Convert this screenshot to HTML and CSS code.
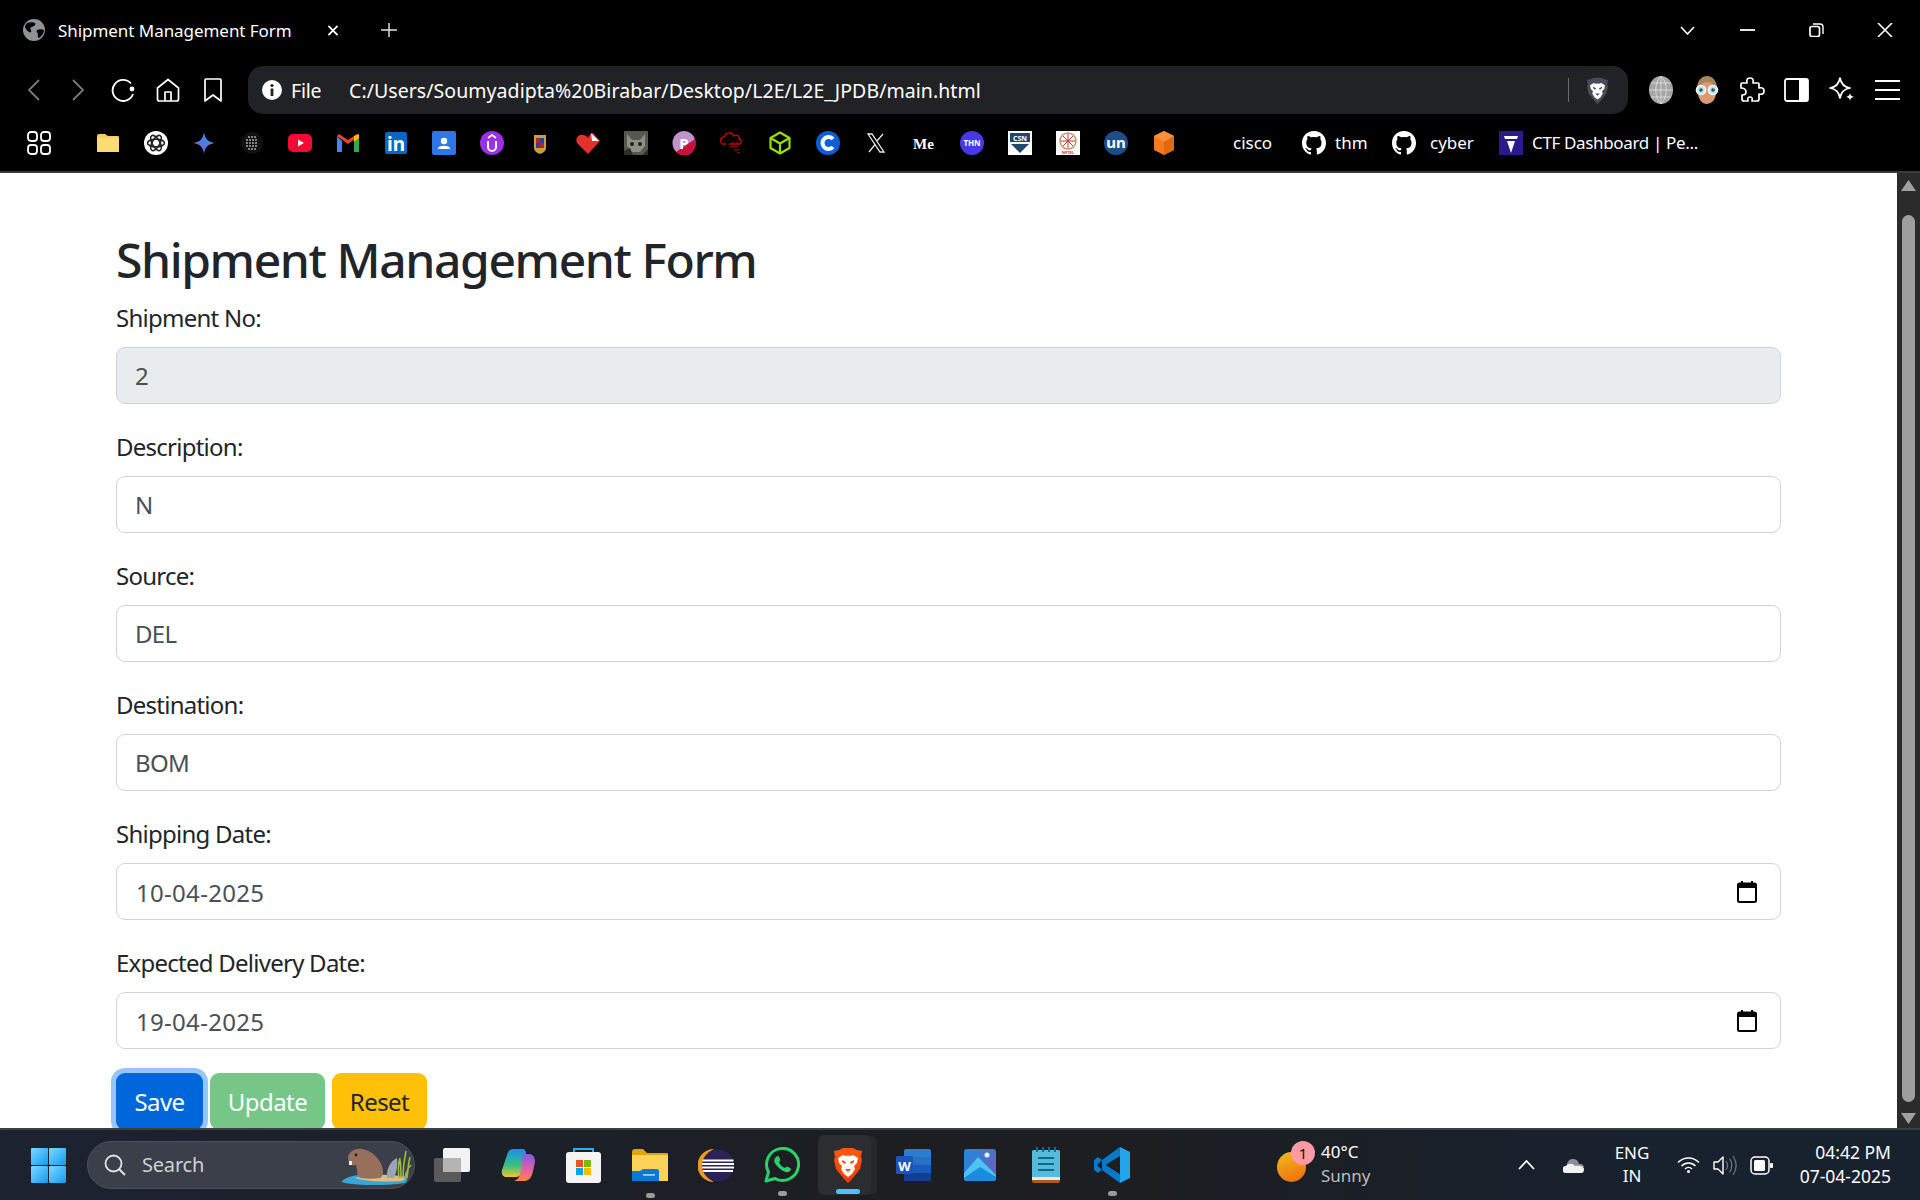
FILE: index.html
```html
<!DOCTYPE html>
<html lang="en">
<head>
<meta charset="utf-8">
<title>Shipment Management Form</title>
<link rel="stylesheet" href="styles.css">
</head>
<body>
<header class="chrome">
  <div class="tabrow">
    <svg class="tab-globe" viewBox="0 0 22 22"><circle cx="11" cy="11" r="11" fill="#8f9296"/><path d="M4 4c3-1 6-1 8 0 1 2-1 3-3 4-2 0-2 2-1 3 1 2-1 3-2 2-2-1-3-3-4-5 0-1 1-3 2-4zM14 11c2-1 5-1 7 0 0 3-2 6-5 8-2-1-1-3-1-4-1-1-2-3-1-4z" fill="#000"/></svg>
    <span class="tab-title">Shipment Management Form</span>
    <svg class="tab-close" viewBox="0 0 12 12"><path d="M1 1l10 10M11 1L1 11" stroke="#fff" stroke-width="2"/></svg>
    <svg class="tab-plus" viewBox="0 0 16 14"><path d="M8 0v14M0 7h16" stroke="#e6e6e6" stroke-width="1.4"/></svg>
    <svg class="win-chev" viewBox="0 0 15 9"><path d="M1 1l6.5 7L14 1" fill="none" stroke="#fff" stroke-width="1.6"/></svg>
    <svg class="win-min" viewBox="0 0 15 2"><path d="M0 1h15" stroke="#fff" stroke-width="1.8"/></svg>
    <svg class="win-max" viewBox="0 0 15 14"><rect x="1" y="3.5" width="9.5" height="10" rx="2" fill="none" stroke="#fff" stroke-width="1.7"/><path d="M4 1h7a3 3 0 0 1 3 3v7" fill="none" stroke="#fff" stroke-width="1.4"/></svg>
    <svg class="win-close" viewBox="0 0 16 14"><path d="M1 0l14 14M15 0L1 14" stroke="#fff" stroke-width="1.6"/></svg>
  </div>
  <div class="toolbar">
    <svg class="tb-back" viewBox="0 0 13 22"><path d="M12 1L2 11l10 10" fill="none" stroke="#7a7a7a" stroke-width="1.8"/></svg>
    <svg class="tb-fwd" viewBox="0 0 13 22"><path d="M1 1l10 10L1 21" fill="none" stroke="#7a7a7a" stroke-width="1.8"/></svg>
    <svg class="tb-reload" viewBox="0 0 24 24"><path d="M20 5.5A10.5 10.500 0 1 0 22 16" fill="none" stroke="#fff" stroke-width="1.8"/><circle cx="21" cy="11" r="2.400" fill="#fff"/></svg>
    <svg class="tb-home" viewBox="0 0 24 24"><path d="M12 1.500L1.500 10v11a2 2 0 0 0 2 2h17a2 2 0 0 0 2-2V10zM9 23v-9h6v9" fill="none" stroke="#fff" stroke-width="1.700" stroke-linejoin="round"/></svg>
    <svg class="tb-mark" viewBox="0 0 18 24"><path d="M2 1h14a1 1 0 0 1 1 1v21l-8-6-8 6V2a1 1 0 0 1 1-1z" fill="none" stroke="#fff" stroke-width="1.700" stroke-linejoin="round"/></svg>
    <div class="omnibox">
      <svg class="info" viewBox="0 0 20 20"><circle cx="10" cy="10" r="10" fill="#fff"/><circle cx="10" cy="5.500" r="1.600" fill="#212226"/><rect x="8.600" y="8.500" width="2.800" height="7.500" fill="#212226"/></svg>
      <span class="scheme">File</span>
      <span class="url">C:/Users/Soumyadipta%20Birabar/Desktop/L2E/L2E_JPDB/main.html</span>
      <span class="omni-sep"></span>
      <svg class="omni-brave" viewBox="0 0 30 36"><path d="M6 3l4-2h10l4 2 5 1-1 6 1 3-2 9-8 10-4 4-4-4-8-10-2-9 1-3-1-6z" fill="#4a4a58"/><path d="M5 11l5-3 3 1 2-.5 2 .5 3-1 5 3-1 5-3 3 1 3-3 5-4 3-4-3-3-5 1-3-3-3z" fill="#fff"/><path d="M9 13l4 2-1 2-3-2zM21 13l-4 2 1 2 3-2zM12 22h6l-3 3z" fill="#4a4a58"/></svg>
    </div>
    <svg class="tb-globe" viewBox="0 0 24 28"><ellipse cx="12" cy="14" rx="12" ry="14" fill="#a5a5a5"/><path d="M0 14h24M2 7h20M2 21h20M12 0v28M12 0c-7 6-7 22 0 28M12 0c7 6 7 22 0 28" fill="none" stroke="#ddd" stroke-width=".9"/></svg>
    <svg class="tb-avatar" viewBox="0 0 24 28"><path d="M2 16C1 4 7 0 12 0s11 4 10 16z" fill="#a8855a"/><ellipse cx="12" cy="17" rx="9" ry="11" fill="#dd9a70"/><circle cx="6" cy="14" r="4.600" fill="#bfe6ec" stroke="#fff" stroke-width="1.400"/><circle cx="18" cy="14" r="4.600" fill="#bfe6ec" stroke="#fff" stroke-width="1.400"/><circle cx="6" cy="14" r="1.800" fill="#27586a"/><circle cx="18" cy="14" r="1.800" fill="#27586a"/></svg>
    <svg class="tb-puzzle" viewBox="0 0 26 26"><path d="M3 6h5C7 2 9 1 11 1s4 1 3 5h5a1 1 0 0 1 1 1v4c4-1 5 1 5 3s-1 4-5 3v5a2 2 0 0 1-2 2h-5c1-4-1-4-2-4s-3 0-2 4H5a2 2 0 0 1-2-2v-4c3 0 4-1 4-3S5 11 2 11V7a1 1 0 0 1 1-1z" fill="none" stroke="#fff" stroke-width="1.700" stroke-linejoin="round"/></svg>
    <svg class="tb-side" viewBox="0 0 25 24"><rect x="1" y="1" width="23" height="22" rx="2" fill="none" stroke="#fff" stroke-width="1.800"/><rect x="15" y="1" width="9" height="22" fill="#fff"/></svg>
    <svg class="tb-star" viewBox="0 0 26 26"><path d="M11 1c1 6 4 9 10 10-6 1-9 4-10 10C10 15 7 12 1 11c6-1 9-4 10-10z" fill="none" stroke="#fff" stroke-width="1.700" stroke-linejoin="round"/><path d="M21 16c.3 2 1 3 4 4-3 .5-3.700 1.500-4 4-.3-2.500-1-3.500-4-4 3-1 3.700-2 4-4z" fill="#fff"/></svg>
    <svg class="tb-menu" viewBox="0 0 25 22"><path d="M0 2h25M0 11h25M0 20h25" stroke="#fff" stroke-width="2"/></svg>
  </div>
  <nav class="bookmarks">
    <div class="bm bm-apps"><svg class="ico" viewBox="0 0 24 24"><g fill="none" stroke="#fff" stroke-width="1.800"><rect x="1" y="1" width="9" height="9" rx="3"/><rect x="14" y="1" width="9" height="9" rx="3"/><rect x="1" y="14" width="9" height="9" rx="3"/><rect x="14" y="14" width="9" height="9" rx="3"/></g></svg></div>
    <div class="bm bm-first"><svg class="ico" viewBox="0 0 24 24"><path d="M1 5a2 2 0 0 1 2-2h6l3 2h10a1 1 0 0 1 1 1v14a1 1 0 0 1-1 1H2a1 1 0 0 1-1-1z" fill="#f8cf5a"/><path d="M1 7h22v13a1 1 0 0 1-1 1H2a1 1 0 0 1-1-1z" fill="#fddc73"/></svg></div>
    <div class="bm"><svg class="ico" viewBox="0 0 24 24"><circle cx="12" cy="12" r="12" fill="#fff"/><g fill="none" stroke="#222" stroke-width="1.600"><ellipse cx="12" cy="12" rx="8.500" ry="3.800"/><ellipse cx="12" cy="12" rx="8.500" ry="3.800" transform="rotate(60 12 12)"/><ellipse cx="12" cy="12" rx="8.500" ry="3.800" transform="rotate(120 12 12)"/></g></svg></div>
    <div class="bm"><svg class="ico" viewBox="0 0 24 24"><defs><linearGradient id="gem" x1="0" x2="1" y1="1" y2="0"><stop offset="0" stop-color="#7a5ac8"/><stop offset="1" stop-color="#2b9cf0"/></linearGradient></defs><path d="M12 1c1 7 4 10 11 11-7 1-10 4-11 11-1-7-4-10-11-11 7-1 10-4 11-11z" fill="url(#gem)"/></svg></div>
    <div class="bm"><svg class="ico" viewBox="0 0 24 24"><circle cx="12" cy="12" r="11" fill="#111"/><g fill="#aaa"><circle cx="9" cy="6" r="1"/><circle cx="12" cy="6" r="1"/><circle cx="15" cy="6" r="1"/><circle cx="7" cy="9" r="1"/><circle cx="10" cy="9" r="1"/><circle cx="13" cy="9" r="1"/><circle cx="16" cy="9" r="1"/><circle cx="7" cy="12" r="1"/><circle cx="10" cy="12" r="1"/><circle cx="13" cy="12" r="1"/><circle cx="16" cy="12" r="1"/><circle cx="7" cy="15" r="1"/><circle cx="10" cy="15" r="1"/><circle cx="13" cy="15" r="1"/><circle cx="16" cy="15" r="1"/><circle cx="9" cy="18" r="1"/><circle cx="12" cy="18" r="1"/><circle cx="15" cy="18" r="1"/></g></svg></div>
    <div class="bm"><svg class="ico" viewBox="0 0 24 24"><rect y="3" width="24" height="18" rx="5" fill="#f40a32"/><path d="M10 8.500l6 3.500-6 3.500z" fill="#fff"/></svg></div>
    <div class="bm"><svg class="ico" viewBox="0 0 24 24"><path d="M1 5v16h5V10z" fill="#4285f4"/><path d="M23 5v16h-5V10z" fill="#34a853"/><path d="M1 5l11 8 11-8-2-2-9 6-9-6z" fill="#ea4335"/><path d="M18 5l5-2v4l-5 4z" fill="#fbbc04"/></svg></div>
    <div class="bm"><svg class="ico" viewBox="0 0 24 24"><rect x="1" y="1" width="22" height="22" rx="2" fill="#0a66c2"/><text class="t-in" x="12" y="19.500" text-anchor="middle">in</text></svg></div>
    <div class="bm"><svg class="ico" viewBox="0 0 24 24"><rect width="24" height="24" rx="2" fill="#2f76e8"/><circle cx="12" cy="10" r="3.200" fill="#fff"/><path d="M6 18h12v-1c-2-3-10-3-12 0z" fill="#fff"/></svg></div>
    <div class="bm"><svg class="ico" viewBox="0 0 24 24"><ellipse cx="12" cy="12" rx="12" ry="12" fill="#9b30e8"/><path d="M8 10v6a4 4 0 0 0 8 0v-6" fill="none" stroke="#fff" stroke-width="2"/><path d="M8 7l4-3 4 3" fill="none" stroke="#fff" stroke-width="1.800"/></svg></div>
    <div class="bm"><svg class="ico" viewBox="0 0 24 24"><path d="M6 4h12v13c0 3-3 5-6 6-3-1-6-3-6-6z" fill="#c9a040"/><rect x="8" y="7" width="4" height="5" fill="#b5242c"/><rect x="12" y="7" width="4" height="5" fill="#2c3f96"/><rect x="8" y="12" width="4" height="5" fill="#2c3f96"/><rect x="12" y="12" width="4" height="5" fill="#b5242c"/></svg></div>
    <div class="bm"><svg class="ico" viewBox="0 0 24 24"><path d="M12 23L1 12c-2-4 1-9 6-8 2 0 4 1 5 3 1-3 3-5 5-5l7 8z" fill="#e5312c"/><path d="M15 2l8 8h-7z" fill="#fff"/></svg></div>
    <div class="bm"><svg class="ico" viewBox="0 0 24 24"><rect width="24" height="24" fill="#56574d"/><path d="M3 3l5 6h8l5-6v12l-5 6H8l-5-6z" fill="#8d8e84"/><circle cx="8" cy="13" r="2" fill="#1f201b"/><circle cx="16" cy="13" r="2" fill="#1f201b"/><path d="M0 20l6-3 3 7H0zM24 18l-5 6h5z" fill="#2c2d28"/></svg></div>
    <div class="bm"><svg class="ico" viewBox="0 0 24 24"><ellipse cx="12" cy="12" rx="11.500" ry="12" fill="#c392c9"/><path d="M23.500 10A11.500 12 0 0 1 4 21L23 8z" fill="#c8103c"/><text class="t-p" x="12" y="18" text-anchor="middle">P</text></svg></div>
    <div class="bm"><svg class="ico" viewBox="0 0 24 24"><path d="M6 13H4a3 3 0 0 1 0-7c1-4 8-6 10-1 3-2 6 0 5 3 3 0 3 5 0 5H9" fill="none" stroke="#c0090c" stroke-width="1.300"/><g fill="#7a0a0c"><rect x="12" y="11" width="2" height="2"/><rect x="16" y="11" width="2" height="2"/><rect x="10" y="15" width="8" height="1.500"/><rect x="14" y="18" width="5" height="1.500"/><rect x="17" y="21" width="3" height="1.500"/></g></svg></div>
    <div class="bm"><svg class="ico" viewBox="0 0 24 24"><path d="M12 1.500l9.500 5.500v10L12 22.500 2.500 17V7zM2.500 7l9.500 5.500L21.500 7M12 12.500v10" fill="none" stroke="#94e000" stroke-width="2.200" stroke-linejoin="round"/></svg></div>
    <div class="bm"><svg class="ico" viewBox="0 0 24 24"><circle cx="12" cy="12" r="12" fill="#0a5fd8"/><path d="M17 8a6 6 0 1 0 0 8" fill="none" stroke="#fff" stroke-width="4"/></svg></div>
    <div class="bm"><svg class="ico" viewBox="0 0 24 24"><path d="M4 3h4l12 18h-4zM19 3l-6.500 7.500M11 13.500L5 21" fill="none" stroke="#e8e8e8" stroke-width="1.300"/></svg></div>
    <div class="bm"><svg class="ico" viewBox="0 0 24 24"><text class="t-me" x="1" y="18">Me</text></svg></div>
    <div class="bm"><svg class="ico" viewBox="0 0 24 24"><circle cx="12" cy="12" r="12" fill="#4738ec"/><text class="t-thn" x="12" y="15" text-anchor="middle">THN</text></svg></div>
    <div class="bm"><svg class="ico" viewBox="0 0 24 24"><rect width="24" height="24" fill="#fff"/><rect x="2" y="2" width="20" height="9" fill="#21476d"/><text class="t-csn" x="12" y="9.500" text-anchor="middle">CSN</text><path d="M3 13h18l-9 9z" fill="#21476d"/></svg></div>
    <div class="bm"><svg class="ico" viewBox="0 0 24 24"><rect width="24" height="24" fill="#fff"/><circle cx="12" cy="10" r="8" fill="none" stroke="#c79658" stroke-width="1.500"/><path d="M12 3v14M5 10h14M7 5l10 10M17 5L7 15" stroke="#c8343c" stroke-width="1"/><text class="t-npt" x="12" y="23" text-anchor="middle">NPTEL</text></svg></div>
    <div class="bm"><svg class="ico" viewBox="0 0 24 24"><circle cx="12" cy="12" r="12" fill="#1c4e8c"/><text class="t-un" x="12" y="17" text-anchor="middle">un</text></svg></div>
    <div class="bm"><svg class="ico" viewBox="0 0 24 24"><path d="M12 0l10 5v14l-10 5-10-5V5z" fill="#f47a20"/><path d="M12 0l10 5-10 6L2 5z" fill="#f98f3a"/><path d="M12 11l10-6v14l-10 5z" fill="#e06a10"/></svg></div>
    <div class="bm-text bm-cisco"><span>cisco</span></div>
    <div class="bm-text bm-thm"><svg class="ico" viewBox="0 0 24 24"><path d="M12 0C5 0 0 5 0 12c0 5 3 10 8 11.500.6.100 1-.3 1-.6v-2c-3 .6-4-1.500-4-1.500-.6-1.400-1.400-1.800-1.400-1.800-1-.7.100-.7.100-.7 1.200.1 1.800 1.200 1.800 1.200 1 1.800 2.800 1.300 3.500 1 .1-.8.400-1.300.8-1.600-2.700-.3-5.500-1.300-5.500-6 0-1.300.5-2.400 1.200-3.200-.1-.3-.5-1.500.1-3.200 0 0 1-.3 3.300 1.200a11.500 11.500 0 0 1 6 0c2.300-1.500 3.300-1.200 3.300-1.200.6 1.700.2 2.900.1 3.200.8.800 1.200 1.900 1.200 3.200 0 4.700-2.800 5.700-5.500 6 .4.400.8 1.100.8 2.200v3.300c0 .3.400.7 1 .6C21 22 24 17 24 12 24 5 19 0 12 0z" fill="#fff"/></svg><span>thm</span></div>
    <div class="bm-text bm-cyber"><svg class="ico" viewBox="0 0 24 24"><path d="M12 0C5 0 0 5 0 12c0 5 3 10 8 11.500.6.100 1-.3 1-.6v-2c-3 .6-4-1.500-4-1.500-.6-1.400-1.400-1.800-1.400-1.800-1-.7.100-.7.100-.7 1.200.1 1.800 1.200 1.800 1.200 1 1.800 2.800 1.300 3.500 1 .1-.8.400-1.300.8-1.600-2.700-.3-5.500-1.300-5.500-6 0-1.300.5-2.400 1.200-3.200-.1-.3-.5-1.500.1-3.200 0 0 1-.3 3.300 1.200a11.500 11.500 0 0 1 6 0c2.300-1.500 3.300-1.200 3.300-1.200.6 1.700.2 2.900.1 3.200.8.800 1.200 1.900 1.200 3.200 0 4.700-2.800 5.700-5.500 6 .4.400.8 1.100.8 2.200v3.300c0 .3.400.7 1 .6C21 22 24 17 24 12 24 5 19 0 12 0z" fill="#fff"/></svg><span>cyber</span></div>
    <div class="bm-text bm-ctf"><svg class="ico" viewBox="0 0 24 24"><rect width="24" height="24" fill="#2b1a8a"/><path d="M5 5h14l-1 3H6z" fill="#fff"/><path d="M8 10h8l-4 12z" fill="#fff"/></svg><span class="ctf-name">CTF Dashboard | Pe...</span></div>
  </nav>
</header>

<div class="viewport">
  <main class="page">
    <form class="form">
      <h2 class="title">Shipment Management Form</h2>
      <div class="field"><label class="label">Shipment No:</label><input class="control control-off" type="text" value="2" readonly></div>
      <div class="field"><label class="label">Description:</label><input class="control" type="text" value="N"></div>
      <div class="field"><label class="label">Source:</label><input class="control" type="text" value="DEL"></div>
      <div class="field"><label class="label">Destination:</label><input class="control" type="text" value="BOM"></div>
      <div class="field"><label class="label">Shipping Date:</label>
        <div class="datebox"><input class="control control-date" type="text" value="10-04-2025">
          <svg class="cal" viewBox="0 0 20 22"><path d="M5 0v3M15 0v3" stroke="#000" stroke-width="2"/><rect x="1" y="2.500" width="18" height="18.500" rx="1.500" fill="none" stroke="#000" stroke-width="2"/><rect x="1" y="2.500" width="18" height="4.500" fill="#000"/></svg></div></div>
      <div class="field"><label class="label">Expected Delivery Date:</label>
        <div class="datebox"><input class="control control-date" type="text" value="19-04-2025">
          <svg class="cal" viewBox="0 0 20 22"><path d="M5 0v3M15 0v3" stroke="#000" stroke-width="2"/><rect x="1" y="2.500" width="18" height="18.500" rx="1.500" fill="none" stroke="#000" stroke-width="2"/><rect x="1" y="2.500" width="18" height="4.500" fill="#000"/></svg></div></div>
      <div class="actions">
        <button class="btn btn-save" type="button">Save</button>
        <button class="btn btn-update" type="button">Update</button>
        <button class="btn btn-reset" type="button">Reset</button>
      </div>
    </form>
  </main>
  <aside class="scrollbar">
    <svg class="sb-arrow" viewBox="0 0 15 11"><path d="M7.500 0L15 11H0z" fill="#a0a0a0"/></svg>
    <div class="sb-thumb"></div>
    <svg class="sb-arrow" viewBox="0 0 15 11"><path d="M0 0h15L7.500 11z" fill="#a0a0a0"/></svg>
  </aside>
</div>

<footer class="taskbar">
  <svg class="tk-start" viewBox="0 0 35 35"><defs><linearGradient id="win" x1="0" y1="0" x2="1" y2="1"><stop offset="0" stop-color="#7fd8ff"/><stop offset="1" stop-color="#0f9bf2"/></linearGradient></defs><g fill="url(#win)"><rect width="17" height="17" rx="1"/><rect x="18" width="17" height="17" rx="1"/><rect y="18" width="17" height="17" rx="1"/><rect x="18" y="18" width="17" height="17" rx="1"/></g></svg>
  <div class="search">
    <svg class="search-ico" viewBox="0 0 22 22"><circle cx="9.500" cy="9.500" r="8" fill="none" stroke="#e4e4e4" stroke-width="1.800"/><path d="M15 15l6 6" stroke="#e4e4e4" stroke-width="2"/></svg>
    <span class="search-txt">Search</span>
    <svg class="beaver" viewBox="0 0 71 37"><path d="M0 34c6-7 20-8 34-8l30 2c3 2 3 5 0 7-20 3-50 3-64-1z" fill="#35a6d6"/><path d="M14 30c10-4 30-4 50-1 0 2 0 3-3 4-16 1-34 1-47-3z" fill="#dcbd86"/><path d="M46 30c-1-8 3-17 10-20 1 8-1 16-3 20z" fill="#9ba3b5"/><path d="M7 9C8 3 15 0 21 1c8 1 17 8 20 17 2 6 1 11-2 12-8 1-18 1-22-1-1-5-1-9-2-12-4 1-8 0-8-8z" fill="#96705a"/><circle cx="15" cy="7" r="1.400" fill="#222"/><rect x="8" y="13" width="3" height="4" fill="#eee"/><g fill="none" stroke="#9cbb3f" stroke-width="1.600"><path d="M58 30c-1-8-1-14 1-20M62 30c0-8 1-18 3-27M66 30c1-6 1-14 3-21M60 30c0-5 0-12-1-18M64 30c1-6 3-10 6-13"/></g></svg>
  </div>
  <svg class="tk-task" viewBox="0 0 36 34"><rect y="10" width="27" height="24" rx="2" fill="#5a5a5a"/><rect x="9" width="27" height="24" rx="2" fill="#f3f3f3"/><rect x="9" y="10" width="18" height="14" fill="#b4b4b4"/></svg>
  <svg class="tk-copilot" viewBox="0 0 34 32"><defs><linearGradient id="cp1" x1="0" y1="0" x2="0" y2="1"><stop offset="0" stop-color="#1b8ef0"/><stop offset=".6" stop-color="#38c27c"/><stop offset="1" stop-color="#f3c52d"/></linearGradient><linearGradient id="cp2" x1="0" y1="0" x2="0" y2="1"><stop offset="0" stop-color="#7e5be6"/><stop offset=".6" stop-color="#e95f9e"/><stop offset="1" stop-color="#f98a3c"/></linearGradient></defs><path d="M12 0h9c3 0 4 2 4 5L21 22c-1 4-3 6-7 6H6c-4 0-6-3-5-7L6 6c1-4 3-6 6-6z" fill="url(#cp1)"/><path d="M21 5h7c4 0 6 3 6 8l-2 9c-1 6-4 10-9 10H13c3-1 5-3 6-7l2-10c.5-4 .5-7 0-10z" fill="url(#cp2)"/></svg>
  <svg class="tk-store" viewBox="0 0 35 35"><path d="M8 5V1h19v4" fill="none" stroke="#2ab0e8" stroke-width="2"/><rect y="4" width="35" height="31" rx="3" fill="#f4f4f4"/><rect x="10" y="12" width="7" height="7" fill="#f25022"/><rect x="18" y="12" width="7" height="7" fill="#7fba00"/><rect x="10" y="20" width="7" height="7" fill="#00a4ef"/><rect x="18" y="20" width="7" height="7" fill="#ffb900"/></svg>
  <div class="tk-app tk-explorer"><svg class="tk-ex-ico" viewBox="0 0 36 32"><path d="M0 3a3 3 0 0 1 3-3h8l4 4h20a1 1 0 0 1 1 1v26H0z" fill="#e0a50c"/><path d="M0 6h36v26H0z" fill="#fdd25a"/><path d="M0 22h8l3-2h14c1 0 2 1 2 2v10H0z" fill="#0a78d4"/><rect x="11" y="25" width="12" height="1.800" fill="#9bd0f5"/></svg><i class="dot"></i></div>
  <svg class="tk-eclipse" viewBox="0 0 36 33"><path d="M16 0A16.500 16.500 0 0 0 16 33 18 18 0 0 1 16 0z" fill="#f09a1e"/><circle cx="20" cy="16.500" r="16" fill="#2c2255"/><path d="M4.500 11.500h31M4 15h32M4 18.500h32M5 22h30" stroke="#fff" stroke-width="1.800"/></svg>
  <div class="tk-app tk-whats"><svg class="tk-wa-ico" viewBox="0 0 36 36"><path d="M2 34l2.500-9A16 16 0 1 1 11 31.500z" fill="none" stroke="#25d366" stroke-width="3" stroke-linejoin="round"/><path d="M12 10c2-2 3-1 4 2 .5 1 0 2-1 3 1 3 3 5 6 6 1-1 2-1.500 3-1 3 1 4 2 2 4-3 3-8 0-12-4s-5-7-2-10z" fill="#25d366"/></svg><i class="dot"></i></div>
  <div class="tk-active">
    <svg class="tk-brave" viewBox="0 0 30 36"><defs><linearGradient id="br" x1="0" y1="0" x2="0" y2="1"><stop offset="0" stop-color="#ff5a14"/><stop offset="1" stop-color="#fb3a00"/></linearGradient></defs><path d="M6 3l4-2h10l4 2 5 1-1 6 1 3-2 9-8 10-4 4-4-4-8-10-2-9 1-3-1-6z" fill="url(#br)"/><path d="M5 11l5-3 3 1 2-.5 2 .5 3-1 5 3-1 5-3 3 1 3-3 5-4 3-4-3-3-5 1-3-3-3z" fill="#fff"/><path d="M9 13l4 2-1 2-3-2zM21 13l-4 2 1 2 3-2zM12 22h6l-3 3z" fill="#ff4a00"/></svg>
    <i class="active-bar"></i>
  </div>
  <svg class="tk-word" viewBox="0 0 35 32"><rect x="8" width="27" height="32" rx="2" fill="#2b7cd3"/><rect x="8" y="8" width="27" height="8" fill="#2a6fc4"/><rect x="8" y="16" width="27" height="8" fill="#185abd"/><rect x="8" y="24" width="27" height="8" fill="#103f91"/><rect y="7" width="17" height="18" rx="1.500" fill="#1d56b8"/><text class="t-w" x="8.500" y="21.500" text-anchor="middle">W</text></svg>
  <svg class="tk-photos" viewBox="0 0 32 32"><defs><linearGradient id="ph" x1="0" y1="0" x2="1" y2="1"><stop offset="0" stop-color="#1b8be0"/><stop offset="1" stop-color="#7a58b8"/></linearGradient></defs><rect width="32" height="32" rx="3" fill="url(#ph)"/><circle cx="23" cy="6" r="2.500" fill="#e8f4fc"/><path d="M0 24L14 8l18 18v3a3 3 0 0 1-3 3H3a3 3 0 0 1-3-3z" fill="#4ac4f0"/><path d="M0 29l16-11 16 10v1a3 3 0 0 1-3 3H3a3 3 0 0 1-3-3z" fill="#1b8be0"/></svg>
  <svg class="tk-note" viewBox="0 0 28 36"><rect y="3" width="28" height="28" rx="1.500" fill="#57bcdc"/><path d="M0 30h28v3H0z" fill="#e8e8e8"/><path d="M0 33h28v1a2 2 0 0 1-2 2H2a2 2 0 0 1-2-2z" fill="#a85c18"/><path d="M5 0v5M11 0v5M17 0v5M23 0v5" stroke="#0c6a90" stroke-width="2"/><path d="M6 11h16M6 17h16M6 23h16" stroke="#0c6a90" stroke-width="2"/></svg>
  <div class="tk-app tk-code"><svg class="tk-co-ico" viewBox="0 0 36 36"><path d="M26 0l10 5v26l-10 5z" fill="#23a5ec"/><path d="M26 0v9L12 18l14 9v9L8 23l-4 3-4-3v-10l4-3 4 3z" fill="#0a78c8"/><path d="M26 9v18l-14-9zM8 13v10l-5-5z" fill="#1c1e22"/></svg><i class="dot"></i></div>
  <div class="weather">
    <div class="orb"><b class="badge">1</b></div>
    <div class="wx"><span class="wx-temp">40°C</span><span class="wx-sky">Sunny</span></div>
  </div>
  <svg class="tray-chev" viewBox="0 0 17 10"><path d="M1 9l7.500-8L16 9" fill="none" stroke="#fff" stroke-width="1.800"/></svg>
  <svg class="tray-cloud" viewBox="0 0 24 16"><path d="M4 9a6 6 0 0 1 12-2 4 4 0 0 1 5 3z" fill="#8b9095"/><path d="M3 16a3.500 3.500 0 0 1 0-7c2-3 7-3 9 0 4-1 9 0 9 3s-1 4-3 4z" fill="#f2f2f2"/></svg>
  <div class="lang"><span>ENG</span><span>IN</span></div>
  <svg class="tray-wifi" viewBox="0 0 23 16"><path d="M1 5.500c6-6 15-6 21 0M4.500 9c4-4 10-4 14 0M8 12c2-2 5-2 7 0" fill="none" stroke="#fff" stroke-width="1.500"/><circle cx="11.500" cy="14.500" r="1.500" fill="#fff"/></svg>
  <svg class="tray-vol" viewBox="0 0 24 21"><path d="M1 7h4l5-5v17l-5-5H1z" fill="none" stroke="#fff" stroke-width="1.400" stroke-linejoin="round"/><path d="M13 6c2 3 2 6 0 9M16.500 3.500c3 4 3 10 0 14M20 1c4 6 4 13 0 19" fill="none" stroke="#6d7785" stroke-width="1.200"/></svg>
  <svg class="tray-bat" viewBox="0 0 23 19"><rect x="1" y="1" width="18" height="17" rx="4" fill="none" stroke="#fff" stroke-width="1.500"/><rect x="4" y="4" width="11" height="11" rx="1.500" fill="#fff"/><rect x="20" y="7" width="3" height="5" rx="1" fill="#fff"/></svg>
  <div class="clock"><span>04:42 PM</span><span>07-04-2025</span></div>
</footer>
</body>
</html>
```

FILE: styles.css
```css
* { box-sizing: border-box; }
html, body { margin: 0; height: 100%; }
body {
  width: 1920px;
  height: 1200px;
  overflow: hidden;
  display: flex;
  flex-direction: column;
  background: #fff;
  font-family: "Noto Sans", "Open Sans", sans-serif;
}
svg { display: block; flex: none; }

/* browser chrome */
.chrome { height: 173px; background: #000; color: #fff; border-bottom: 2px solid #3a3a3a; flex: none; }
.tabrow { height: 60px; display: flex; align-items: center; padding-left: 23px; }
.tab-globe { width: 22px; height: 22px; margin-right: 13px; }
.tab-title { width: 269px; font-size: 17px; letter-spacing: -.05px; white-space: nowrap; }
.tab-close { width: 12px; height: 11px; }
.tab-plus { width: 16px; height: 14px; margin-left: 42px; }
.win-chev { width: 15px; height: 9px; margin-left: 1283px; }
.win-min { width: 15px; height: 2px; margin-left: 45px; }
.win-max { width: 15px; height: 14px; margin-left: 54px; }
.win-close { width: 16px; height: 14px; margin-left: 53px; }

.toolbar { height: 60px; display: flex; align-items: center; padding-left: 27px; }
.tb-back { width: 13px; height: 22px; }
.tb-fwd { width: 13px; height: 22px; margin-left: 32px; }
.tb-reload { width: 24px; height: 24px; margin-left: 26px; }
.tb-home { width: 24px; height: 24px; margin-left: 21px; }
.tb-mark { width: 18px; height: 24px; margin-left: 24px; }
.omnibox {
  width: 1380px; height: 48px; margin-left: 26px; padding-left: 14px;
  display: flex; align-items: center;
  background: #212226; border-radius: 15px; font-size: 19.5px;
}
.info { width: 20px; height: 20px; }
.scheme { width: 58px; margin-left: 9px; letter-spacing: -.2px; }
.url { width: 1219px; letter-spacing: .06px; white-space: nowrap; }
.omni-sep { width: 1px; height: 24px; background: #6a6a6a; }
.omni-brave { width: 23px; height: 27px; margin-left: 17px; }
.tb-globe { width: 24px; height: 28px; margin-left: 21px; }
.tb-avatar { width: 24px; height: 28px; margin-left: 22px; }
.tb-puzzle { width: 26px; height: 26px; margin-left: 20px; }
.tb-side { width: 25px; height: 24px; margin-left: 19px; }
.tb-star { width: 26px; height: 26px; margin-left: 20px; }
.tb-menu { width: 25px; height: 22px; margin-left: 20px; }

.bookmarks { height: 51px; display: flex; align-items: flex-start; padding: 11px 0 0 15px; font-size: 17px; }
.bm { width: 48px; height: 24px; display: flex; justify-content: center; }
.bm-first { margin-left: 21px; }
.ico { width: 24px; height: 24px; }
.bm-text { display: flex; align-items: center; height: 24px; white-space: nowrap; }
.bm-text span { margin-top: -2px; }
.bm-cisco { width: 69px; margin-left: 45px; }
.bm-thm { width: 90px; gap: 9px; }
.bm-cyber { width: 107px; gap: 14px; }
.bm-ctf { gap: 9px; }
.ctf-name { letter-spacing: -.35px; }

.t-in { font: 700 19px "Noto Sans", sans-serif; fill: #fff; }
.t-p { font: 700 15px "Noto Sans", sans-serif; fill: #fff; }
.t-me { font: 700 15px "Liberation Serif", serif; fill: #fff; }
.t-thn { font: 700 8px "Noto Sans", sans-serif; fill: #fff; }
.t-csn { font: 700 7px "Noto Sans", sans-serif; fill: #fff; }
.t-npt { font: 700 4px "Noto Sans", sans-serif; fill: #c8343c; }
.t-un { font: 700 15px "Noto Sans", sans-serif; fill: #fff; }
.t-w { font: 700 13px "Noto Sans", sans-serif; fill: #fff; }

/* page */
.viewport { flex: 1; min-height: 0; display: flex; }
.page { flex: 1; min-width: 0; overflow: hidden; padding: 58px 0 0 116px; background: #fff; color: #212529; }
.form { width: 1665px; }
.title { margin: 0 0 10px; font-size: 48px; line-height: 58px; font-weight: 500; letter-spacing: -1.4px; white-space: nowrap; }
.field { margin-bottom: 24px; }
.label { display: block; padding-top: 1px; margin-bottom: 11px; font-size: 24px; line-height: 36px; letter-spacing: -.75px; }
.control {
  display: block; width: 100%; height: 57px; padding: 0 18px;
  border: 1px solid #ced4da; border-radius: 9px; background: #fff;
  font: 400 24px/36px "Noto Sans", "Open Sans", sans-serif; color: #495057;
  letter-spacing: -.7px; outline: none;
}
.control-off { background: #e9ecef; }
.control-date { letter-spacing: .3px; padding: 2px 0 0 19px; }
.datebox { position: relative; }
.cal { position: absolute; right: 24px; top: 18px; width: 20px; height: 22px; }
.actions { display: flex; gap: 7px; }
.btn {
  height: 57px; border: 1px solid transparent; border-radius: 9px; padding: 0;
  font: 400 24px/36px "Noto Sans", "Open Sans", sans-serif; letter-spacing: -.55px;
}
.btn-save { width: 87px; background: #0067db; color: #fff; box-shadow: 0 0 0 5px #98c4fb; }
.btn-update { width: 115px; background: #75c687; color: #fff; }
.btn-reset { width: 95px; background: #ffc107; color: #212529; }

.scrollbar { width: 23px; background: #2b2b2b; display: flex; flex-direction: column; align-items: center; padding-top: 7px; }
.sb-arrow { width: 15px; height: 11px; }
.sb-thumb { width: 13px; height: 887px; margin: 24px 0 11px; background: #9e9e9e; border-radius: 7px; }

/* taskbar */
.taskbar {
  height: 72px; flex: none; display: flex; align-items: center; color: #fff;
  border-top: 2px solid #3b4048;
  background: linear-gradient(90deg, #1c2230 0, #1c2029 25%, #1c1e22 45%, #1c1e22 60%, #18212e 85%, #18222f 100%);
  padding-left: 31px; font-size: 17px;
}
.tk-start { width: 35px; height: 35px; }
.search {
  width: 328px; height: 48px; margin-left: 21px; padding-left: 16px;
  display: flex; align-items: center; position: relative;
  background: #3a3f4a; border: 1px solid #4b505a; border-radius: 24px;
}
.search-ico { width: 22px; height: 22px; }
.search-txt { margin: -2px 0 0 16px; font-size: 20px; letter-spacing: -.2px; color: #cfd1d4; }
.beaver { position: absolute; left: 253px; top: 6px; width: 71px; height: 37px; }
.tk-task { width: 36px; height: 34px; margin-left: 19px; }
.tk-copilot { width: 34px; height: 32px; margin-left: 31px; }
.tk-store { width: 35px; height: 35px; margin-left: 31px; }
.tk-app { position: relative; display: flex; justify-content: center; }
.dot { position: absolute; left: 50%; top: 44px; width: 9px; height: 5px; margin-left: -4px; border-radius: 3px; background: #9a9a9a; }
.tk-explorer { width: 36px; margin-left: 31px; }
.tk-ex-ico { width: 36px; height: 32px; }
.tk-eclipse { width: 36px; height: 33px; margin-left: 30px; }
.tk-whats { width: 36px; margin-left: 30px; }
.tk-wa-ico { width: 36px; height: 36px; }
.tk-active {
  position: relative; width: 53px; height: 60px; margin-left: 18px; padding: 12px 0 0 7px;
  display: flex; justify-content: center;
  background: #2c2d31; border-radius: 6px; box-shadow: 7px 0 0 -1px #26272b;
}
.tk-brave { width: 30px; height: 36px; }
.active-bar { position: absolute; left: 18px; bottom: 1px; width: 24px; height: 5px; border-radius: 3px; background: #4cc2ff; }
.tk-word { width: 35px; height: 32px; margin-left: 25px; }
.tk-photos { width: 32px; height: 32px; margin-left: 33px; }
.tk-note { width: 28px; height: 36px; margin-left: 36px; }
.tk-code { width: 36px; margin-left: 34px; }
.tk-co-ico { width: 36px; height: 36px; }
.weather { width: 241px; margin-left: 147px; display: flex; align-items: center; }
.orb { position: relative; width: 29px; height: 30px; border-radius: 50%; background: linear-gradient(160deg, #eebb22, #f06a08); margin-top: 4px; }
.badge {
  position: absolute; left: 14px; top: -11px; width: 24px; height: 24px; border-radius: 50%;
  background: #ff99a4; color: #111; font: 400 15px/24px "Noto Sans", sans-serif; text-align: center;
}
.wx { display: flex; flex-direction: column; margin: -2px 0 0 15px; line-height: 24px; }
.wx-temp { font-size: 17px; }
.wx-sky { font-size: 17px; color: #bdbdbd; }
.tray-chev { width: 17px; height: 10px; }
.tray-cloud { width: 24px; height: 16px; margin-left: 28px; }
.lang { width: 34px; margin: -2px 0 0 28px; display: flex; flex-direction: column; align-items: center; line-height: 23px; font-size: 17px; }
.tray-wifi { width: 23px; height: 16px; margin-left: 28px; }
.tray-vol { width: 24px; height: 21px; margin-left: 13px; }
.tray-bat { width: 23px; height: 19px; margin-left: 13px; }
.clock { width: 118px; margin-top: -2px; display: flex; flex-direction: column; align-items: flex-end; line-height: 24px; font-size: 17.5px; white-space: nowrap; }
```
